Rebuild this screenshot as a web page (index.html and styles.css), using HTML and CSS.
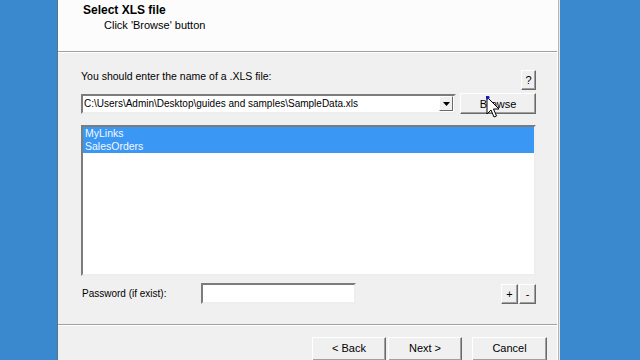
FILE: index.html
```html
<!DOCTYPE html>
<html lang="en">
<head>
    <meta charset="UTF-8">
    <title>Select XLS file</title>
    <link rel="stylesheet" href="styles.css">
</head>
<body>
    <div class="desktop">
        <div class="dialog">
            <div class="header">
                <div class="title">Select XLS file</div>
                <div class="subtitle">Click 'Browse' button</div>
            </div>

            <div class="content">
                <div class="row-label">
                    <span class="label">You should enter the name of a .XLS file:</span>
                    <button class="btn help">?</button>
                </div>

                <div class="row-file">
                    <div class="combo">
                        <span class="path">C:\Users\Admin\Desktop\guides and samples\SampleData.xls</span>
                        <span class="drop">
                            <svg width="7" height="4" viewBox="0 0 7 4"><path d="M0 0H7L3.5 4Z" fill="#000"/></svg>
                        </span>
                    </div>
                    <button class="btn browse">Browse</button>
                </div>

                <div class="list">
                    <div class="item selected">MyLinks</div>
                    <div class="item selected">SalesOrders</div>
                </div>

                <div class="row-pass">
                    <span class="label pass-label">Password (if exist):</span>
                    <input type="password" class="field">
                    <div class="pm">
                        <button class="btn tiny">+</button>
                        <button class="btn tiny">-</button>
                    </div>
                </div>
            </div>

            <div class="footer">
                <button class="btn nav">&lt; Back</button>
                <button class="btn nav">Next &gt;</button>
                <button class="btn nav cancel">Cancel</button>
            </div>
        </div>

        <svg class="cursor" width="16" height="24" viewBox="0 0 16 24">
            <path d="M1 1V18L5 14L8 21L10.5 20L7.5 13H13Z" fill="#fff" stroke="#000" stroke-width="1"/>
            <circle cx="1.5" cy="1.5" r="2" fill="#1a1ab0"/>
        </svg>
    </div>
</body>
</html>
```

FILE: styles.css
```css
body {
    margin: 0;
    font-family: "Liberation Sans", Arial, sans-serif;
    font-size: 10.5px;
    color: #000;
}
.desktop {
    position: relative;
    width: 640px;
    height: 360px;
    overflow: hidden;
    background-color: #3a89cf;
    display: flex;
}
.dialog {
    margin-left: 57px;
    width: 499px;
    height: 380px;
    border-left: 1px solid #5d7285;
    border-right: 1px solid #ffffff;
    box-shadow: 1px 0 0 #b5b5b5, 2px 0 0 #e8e8e8;
    background-color: #f0f0f0;
    display: flex;
    flex-direction: column;
}
.header {
    height: 48px;
    padding: 3px 0 0 25px;
    background-color: #fcfcfc;
    border-bottom: 1px solid #a0a0a0;
}
.title {
    font-weight: bold;
    font-size: 12px;
    line-height: 14px;
}
.subtitle {
    margin-top: 2px;
    padding-left: 21px;
    line-height: 13px;
    font-size: 11px;
}
.content {
    padding: 17px 21px 20px 23px;
    border-top: 1px solid #ffffff;
    display: flex;
    flex-direction: column;
}
.btn {
    font-family: "Liberation Sans", Arial, sans-serif;
    font-size: 11px;
    color: #000;
    background-color: #f0f0f0;
    border: 1px solid;
    border-color: #ffffff #6a6a6a #6a6a6a #ffffff;
    box-shadow: inset -1px -1px 0 #a0a0a0;
    padding: 0;
    margin: 0;
}
.row-label {
    height: 20px;
    display: flex;
    justify-content: space-between;
    align-items: flex-end;
}
.row-label .label {
    line-height: 13px;
    padding-bottom: 7px;
}
.help {
    width: 15px;
    height: 20px;
}
.row-file {
    margin-top: 3px;
    height: 21px;
    display: flex;
    align-items: center;
    gap: 4px;
}
.combo {
    width: 372px;
    height: 16px;
    background-color: #fff;
    border: 2px solid;
    border-color: #7c7c7c #eeeeee #eeeeee #7c7c7c;
    display: flex;
    align-items: center;
    justify-content: space-between;
}
.path {
    padding-left: 1px;
    font-size: 10px;
    white-space: nowrap;
}
.drop {
    width: 14px;
    height: 15px;
    margin-right: 1px;
    background-color: #f0f0f0;
    border: 1px solid;
    border-color: #ffffff #6a6a6a #6a6a6a #ffffff;
    display: flex;
    align-items: center;
    justify-content: center;
    box-sizing: border-box;
}
.browse {
    width: 76px;
    height: 21px;
}
.list {
    margin-top: 11px;
    height: 147px;
    background-color: #fff;
    border: 2px solid;
    border-color: #7c7c7c #eeeeee #eeeeee #7c7c7c;
}
.item {
    height: 13px;
    line-height: 13px;
    padding-left: 2px;
}
.selected {
    background-color: #3b97f4;
    color: #f4f8ff;
}
.row-pass {
    margin-top: 7px;
    height: 21px;
    display: flex;
    align-items: center;
}
.pass-label {
    width: 119px;
    padding-left: 1px;
    font-size: 10px;
}
.field {
    width: 151px;
    height: 17px;
    margin: 0;
    padding: 0;
    background-color: #fff;
    border: 2px solid;
    border-color: #7c7c7c #eeeeee #eeeeee #7c7c7c;
}
.pm {
    margin-left: auto;
    display: flex;
    gap: 1px;
}
.tiny {
    width: 17px;
    height: 20px;
}
.footer {
    border-top: 1px solid #a0a0a0;
    box-shadow: inset 0 1px 0 #ffffff;
    padding: 12px 10px 0 0;
    display: flex;
    justify-content: flex-end;
    gap: 2px;
}
.nav {
    width: 74px;
    height: 24px;
    padding-bottom: 2px;
}
.cancel {
    margin-left: 8px;
    width: 75px;
}
.cursor {
    position: absolute;
    left: 486px;
    top: 96px;
}
```
